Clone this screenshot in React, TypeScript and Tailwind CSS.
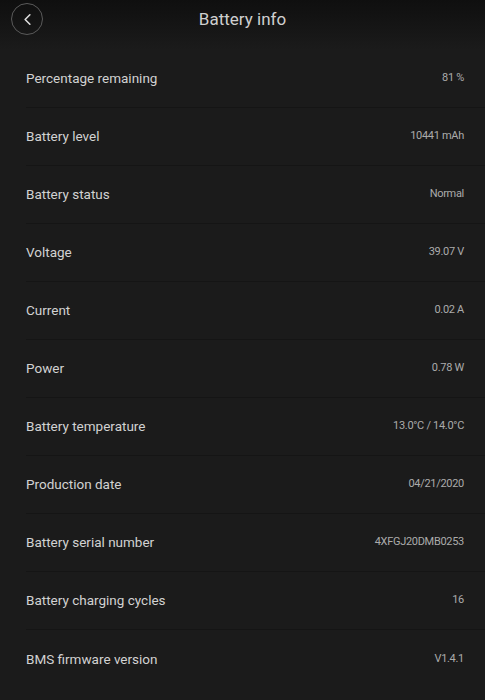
import { ChevronLeft } from 'lucide-react';

const rows: [string, string][] = [
  ['Percentage remaining', '81 %'],
  ['Battery level', '10441 mAh'],
  ['Battery status', 'Normal'],
  ['Voltage', '39.07 V'],
  ['Current', '0.02 A'],
  ['Power', '0.78 W'],
  ['Battery temperature', '13.0°C / 14.0°C'],
  ['Production date', '04/21/2020'],
  ['Battery serial number', '4XFGJ20DMB0253'],
  ['Battery charging cycles', '16'],
  ['BMS firmware version', 'V1.4.1'],
];

export default function App() {
  return (
    <div className="w-[485px] h-[700px] overflow-hidden bg-[#1b1b1b] font-['Roboto',sans-serif]">
      {/* header */}
      <div className="relative h-[50px] bg-gradient-to-b from-[#0f0f0f] to-[#1b1b1b] flex items-start justify-center">
        <button className="absolute left-[11px] top-[3px] w-[32px] h-[32px] rounded-full border border-[#5a5a5a] flex items-center justify-center text-[#ddd]">
          <ChevronLeft size={19} strokeWidth={2} />
        </button>
        <h1 className="mt-[8px] text-[17px] leading-[22px] text-[#cfcfcf]">Battery info</h1>
      </div>

      {/* list */}
      <div className="flex flex-col">
        {rows.map(([label, value], i) => (
          <div key={label} className="pl-[26px]">
            <div
              className={
                'h-[58px] flex items-center justify-between pr-[21px] ' +
                (i < rows.length - 1 ? 'border-b border-[#151515]' : '')
              }
            >
              <span className="text-[13.5px] text-[#d2d2d2]">{label}</span>
              <span className="text-[11px] tracking-[-0.3px] text-[#ababab]">{value}</span>
            </div>
          </div>
        ))}
      </div>
    </div>
  );
}
